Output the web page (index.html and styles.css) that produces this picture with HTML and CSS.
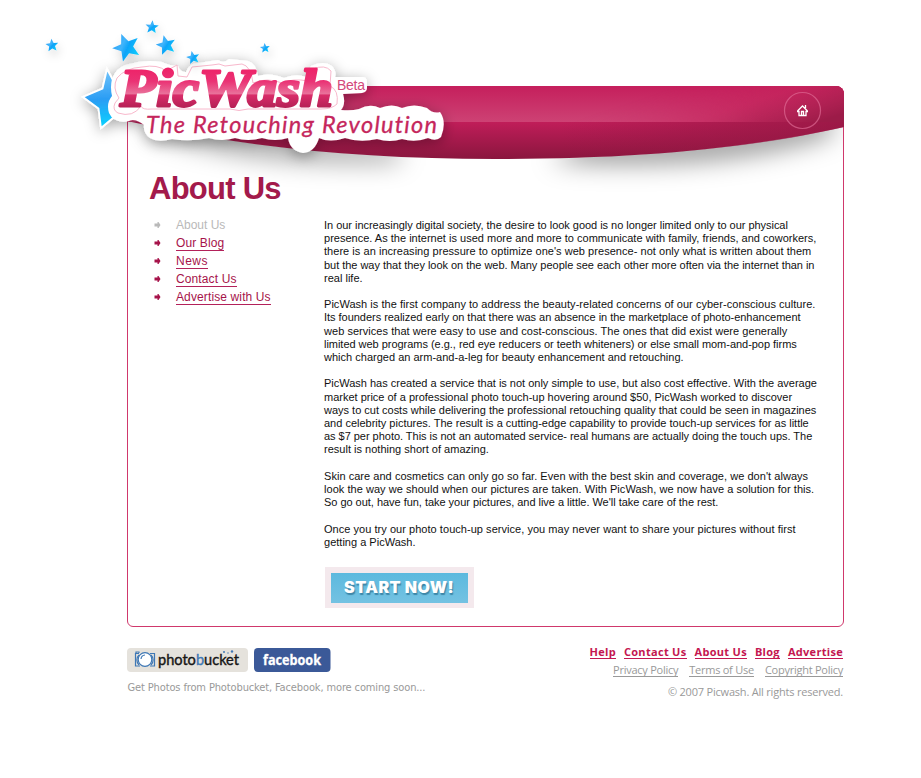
FILE: index.html
```html
<!DOCTYPE html>
<html lang="en">
<head>
<meta charset="utf-8">
<title>PicWash - About Us</title>
<link rel="stylesheet" href="styles.css">
</head>
<body>
<div class="page">
  <div class="panel">
    <h1>About Us</h1>
    <div class="columns">
      <ul class="menu">
        <li class="current"><svg class="arrow" viewBox="0 0 6 6"><path d="M0 1.500h3V0h1l2 3-2 3H3V4.500H0z"/></svg><span>About Us</span></li>
        <li><svg class="arrow" viewBox="0 0 6 6"><path d="M0 1.500h3V0h1l2 3-2 3H3V4.500H0z"/></svg><a>Our Blog</a></li>
        <li><svg class="arrow" viewBox="0 0 6 6"><path d="M0 1.500h3V0h1l2 3-2 3H3V4.500H0z"/></svg><a class="wide">News</a></li>
        <li><svg class="arrow" viewBox="0 0 6 6"><path d="M0 1.500h3V0h1l2 3-2 3H3V4.500H0z"/></svg><a>Contact Us</a></li>
        <li><svg class="arrow" viewBox="0 0 6 6"><path d="M0 1.500h3V0h1l2 3-2 3H3V4.500H0z"/></svg><a>Advertise with Us</a></li>
      </ul>
      <div class="copy">
        <p><span class="tight">In our increasingly digital society, the desire to look good is no longer limited only to our physical</span><br>presence. As the internet is used more and more to communicate with family, friends, and coworkers,<br><span class="loose">there is an increasing pressure to optimize one's web presence- not only what is written about them</span><br><span class="tight">but the way that they look on the web. Many people see each other more often via the internet than in</span><br>real life.</p>
        <p><span class="loose">PicWash is the first company to address the beauty-related concerns of our cyber-conscious culture.</span><br><span class="tight">Its founders realized early on that there was an absence in the marketplace of photo-enhancement</span><br><span class="loose">web services that were easy to use and cost-conscious. The ones that did exist were generally</span><br><span class="tight">limited web programs (e.g., red eye reducers or teeth whiteners) or else small mom-and-pop firms</span><br>which charged an arm-and-a-leg for beauty enhancement and retouching.</p>
        <p><span class="even">PicWash has created a service that is not only simple to use, but also cost effective. With the average<br>market price of a professional photo touch-up hovering around $50, PicWash worked to discover<br>ways to cut costs while delivering the professional retouching quality that could be seen in magazines<br>and celebrity pictures. The result is a cutting-edge capability to provide touch-up services for as little</span><br><span class="tight">as $7 per photo. This is not an automated service- real humans are actually doing the touch ups. The</span><br>result is nothing short of amazing.</p>
        <p><span class="loose">Skin care and cosmetics can only go so far. Even with the best skin and coverage, we don't always</span><br><span class="loose">look the way we should when our pictures are taken. With PicWash, we now have a solution for this.</span><br><span class="tight">So go out, have fun, take your pictures, and live a little. We'll take care of the rest.</span></p>
        <p><span class="loose">Once you try our photo touch-up service, you may never want to share your pictures without first</span><br>getting a PicWash.</p>
        <a class="start"><svg width="137" height="30"><text x="13" y="20">START NOW!</text></svg></a>
      </div>
    </div>
  </div>

  <div class="footer">
    <div class="partners">
      <div class="badges">
        <svg width="121" height="24" viewBox="0 0 121 24">
          <rect width="121" height="24" rx="4" fill="#e5e2dc"/>
          <g fill="none" stroke="#3f78b5" stroke-width="1.200">
            <path d="M12 5.500H8.500v12.500H13M9 5V4h3v1M23 5.500h4.500v12.500H23"/>
            <path d="M12 7a7 7 0 0 0 0 10M24 7a7 7 0 0 1 0 10"/>
            <circle cx="18" cy="11.500" r="6.800" fill="#fff"/>
            <path d="M14 11a4.500 4.500 0 0 1 4-4"/>
          </g>
          <text x="31" y="17" font-family="Lato, sans-serif" font-size="15" fill="#161616" stroke="#161616" stroke-width=".4" textLength="81" lengthAdjust="spacingAndGlyphs">photo<tspan fill="#3f78b5" stroke="#3f78b5">b</tspan>ucket</text>
          <g fill="#3f78b5"><circle cx="97" cy="4" r="1"/><circle cx="101" cy="5" r=".7"/><circle cx="105" cy="3.500" r="1.200"/></g>
        </svg>
        <svg width="77" height="24" viewBox="0 0 77 24">
          <rect width="76.500" height="24" rx="4" fill="#3b5998"/>
          <text x="9" y="17" font-family="Open Sans, sans-serif" font-size="14.500" font-weight="700" fill="#fff" stroke="#fff" stroke-width=".3" textLength="58" lengthAdjust="spacingAndGlyphs">facebook</text>
        </svg>
      </div>
      <div class="soon"><svg width="300" height="18"><text x="0.500" y="13" textLength="298">Get Photos from Photobucket, Facebook, more coming soon...</text></svg></div>
    </div>
    <div class="legal">
      <div class="links bold"><a>Help</a><a>Contact Us</a><a>About Us</a><a>Blog</a><a>Advertise</a></div>
      <div class="links"><a>Privacy Policy</a><a>Terms of Use</a><a>Copyright Policy</a></div>
      <div class="copyright">© 2007 Picwash. All rights reserved.</div>
    </div>
  </div>

  <svg class="masthead" width="921" height="210" viewBox="0 0 921 210">
    <defs>
      <linearGradient id="upper" x1="0" y1="0" x2="0" y2="1"><stop offset="0" stop-color="#c51f5c"/><stop offset="1" stop-color="#cd4274"/></linearGradient>
      <linearGradient id="lower" gradientUnits="userSpaceOnUse" x1="0" y1="122" x2="0" y2="159"><stop offset="0" stop-color="#c01d59"/><stop offset="1" stop-color="#8a163e"/></linearGradient>
      <linearGradient id="shine" gradientUnits="userSpaceOnUse" x1="690" y1="40" x2="740" y2="190"><stop offset=".25" stop-color="#c81f5c" stop-opacity="0"/><stop offset=".5" stop-color="#c4245c" stop-opacity=".7"/><stop offset=".75" stop-color="#9c1b48"/></linearGradient>
      <linearGradient id="fadeIn" x1="0" x2="1"><stop offset="0" stop-color="#000"/><stop offset=".7" stop-color="#fff"/></linearGradient>
      <mask id="rightSide"><rect x="560" y="86" width="284" height="36" fill="url(#fadeIn)"/></mask>
      <linearGradient id="rightDark" x1="0" x2="1"><stop offset="0" stop-color="#8e1740" stop-opacity="0"/><stop offset="1" stop-color="#8e1740" stop-opacity=".7"/></linearGradient>
      <linearGradient id="letters" gradientUnits="userSpaceOnUse" x1="0" y1="68" x2="0" y2="112"><stop offset="0" stop-color="#ee2268"/><stop offset=".3" stop-color="#ea3274"/><stop offset=".58" stop-color="#e9709a"/><stop offset=".62" stop-color="#d82c69"/><stop offset="1" stop-color="#a91d4e"/></linearGradient>
      <linearGradient id="blue" x1="0" y1="0" x2="1" y2="1"><stop offset="0" stop-color="#229af2"/><stop offset=".4" stop-color="#40b4fb"/><stop offset=".55" stop-color="#0fa4f8"/><stop offset="1" stop-color="#08dcff"/></linearGradient>
      <linearGradient id="bigBlue" gradientUnits="userSpaceOnUse" x1="104" y1="70" x2="108" y2="128"><stop offset="0" stop-color="#72c4fb"/><stop offset=".5" stop-color="#2a9df4"/><stop offset="1" stop-color="#08d4ff"/></linearGradient>
      <filter id="blur" x="-30%" y="-80%" width="160%" height="260%"><feGaussianBlur stdDeviation="13"/></filter>
      <filter id="soft" x="-20%" y="-50%" width="140%" height="200%"><feDropShadow dx="0" dy="3" stdDeviation="7" flood-color="#000" flood-opacity=".35"/></filter>
      <filter id="faint" x="-100%" y="-100%" width="300%" height="300%"><feDropShadow dx="2" dy="5" stdDeviation="5" flood-color="#000" flood-opacity=".16"/></filter>
      <path id="star" d="M0-10 2.800-3.300 9.800-3 4.500 1.500 6.200 8.600 0 4.900-6.200 8.600-4.500 1.500-9.800-3-2.800-3.300z"/>
      <clipPath id="under"><path d="M128 121C240 147 370 159 495 159S740 150 843 127V210H128z"/></clipPath>
    </defs>
    <g clip-path="url(#under)"><g filter="url(#blur)" fill="#000">
      <path opacity=".43" d="M590 138Q710 142 832 112V134Q720 172 550 160z"/>
      <path opacity=".42" d="M150 118Q260 140 400 148V160Q260 166 155 132z"/>
    </g></g>
    <path fill="url(#lower)" d="M127 121V86H836a8 8 0 0 1 8 8V127C740 150 630 159 495 159S240 147 127 121z"/>
    <path fill="url(#rightDark)" d="M560 122H844V127C770 144 690 154 560 158z"/>
    <path fill="url(#upper)" d="M127 86H836a8 8 0 0 1 8 8V122H127z"/>
    <path fill="url(#shine)" mask="url(#rightSide)" d="M560 86H836a8 8 0 0 1 8 8V122H560z"/>
    <circle cx="802.500" cy="110.500" r="18" fill="none" stroke="#e26f98" stroke-opacity=".65" stroke-width="1.200"/>
    <path fill="none" stroke="#fff" stroke-width="1.300" d="M797 111.500H799V115.500H806V111.500H808M797.500 111L802.500 106 807.500 111M805.500 108V105M801.500 115V111.500H803.500V115"/>

    <g filter="url(#soft)" fill="#fff">
      <path fill="url(#bigBlue)" stroke="#fff" stroke-width="1.800" d="M107 69 116 86 132 88V118L113 118 101 128 98.500 108.500 83 97 102.500 88.500z"/>
      <path d="M115 73Q120 66 129 64Q145 59 162 62Q170 66 178 66Q180 72 186 72Q189 63 198 63L218 60Q224 64 229 59L248 61Q256 63 258 76Q270 72 284 78Q296 73 306 77L311 66Q324 60 332 66Q337 72 335 77L362 77Q367 77 367 82V88Q367 92 362 93L343 94Q346 104 341 110Q352 111 359 109Q370 103 380 108Q392 103 402 108Q414 103 427 108Q433 114 440 112Q447 122 441 137Q436 142 428 138Q415 143 402 139Q390 143 377 139Q360 143 345 138Q330 143 319 138Q315 152 303 153Q290 151 288 138Q275 142 262 138Q248 142 235 138Q222 142 209 138Q190 142 172 139Q158 143 150 138Q143 133 144 125Q135 118 129 121Q114 124 109 113Q106 103 112 96Q109 82 115 73z"/>
    </g>
    <path fill="none" stroke="#f8b8cc" stroke-linejoin="round" d="M117 78Q125 68 142 67Q158 64 166 71L177 65 178 76 187 77 192 67 212 65 219 64 225 66 242 64Q251 66 253 83Q267 77 282 83Q293 78 308 81L313 69Q325 64 331 71L330 86Q339 90 337 104Q332 109 321 109L248 109Q239 112 230 109H152Q142 110 141 106Q133 118 118 113Q112 110 115 103L119 98Q112 88 117 78z"/>
    <g fill="url(#blue)" filter="url(#faint)">
      <use href="#star" transform="translate(52 45.300) rotate(-5) scale(.65)"/>
      <use href="#star" transform="translate(126.500 47) rotate(-22) scale(1.400)"/>
      <use href="#star" transform="translate(152 27) rotate(5) scale(.67)"/>
      <use href="#star" transform="translate(166 45) rotate(-14) scale(1)"/>
      <use href="#star" transform="translate(193 57.500) rotate(-12) scale(.67)"/>
      <use href="#star" transform="translate(265 48) rotate(-5) scale(.5)"/>
    </g>
    <text class="brand" x="120" y="106" fill="url(#letters)" stroke="url(#letters)" textLength="213" lengthAdjust="spacingAndGlyphs">PicWash</text>
    <text class="tagline" x="146" y="133" textLength="291">The Retouching Revolution</text>
    <text x="337" y="90" font-family="Liberation Sans, sans-serif" font-size="14" fill="#d3487a" textLength="28">Beta</text>
  </svg>
</div>
</body>
</html>
```
FILE: styles.css
```css
body { margin: 0; background: #fff; font-family: "Liberation Sans", Arial, sans-serif; }
.page { position: relative; width: 921px; height: 778px; overflow: hidden; padding-top: 86px; box-sizing: border-box; }
.panel { box-sizing: border-box; width: 717px; height: 541px; margin-left: 127px; border: 1px solid #d0386c; border-radius: 8px 8px 6px 6px; padding: 85px 0 0 21px; }
.masthead { position: absolute; left: 0; top: 0; pointer-events: none; }
.brand { font: italic 700 52px "Liberation Serif", serif; stroke-width: 2.8px; stroke-linejoin: round; }
.tagline { font: italic 23.5px Lato, sans-serif; font-variant-ligatures: none; fill: #c5265c; stroke: #c5265c; stroke-width: .3px; }
h1 { position: relative; z-index: 1; margin: 0; font-size: 31px; line-height: 34px; letter-spacing: -.75px; color: #a31a4b; }
.columns { display: flex; padding-top: 10px; }
.menu { list-style: none; margin: 0; padding: 0; width: 175px; font-size: 12px; color: #a6134a; }
.menu li { display: flex; align-items: center; height: 18px; }
.menu .current { color: #b9b9b9; }
.arrow { width: 7px; height: 6px; margin: 0 15px 0 5px; fill: currentColor; }
.menu a { margin-top: 1px; padding-top: 1px; border-bottom: 1px solid #b3215a; line-height: 13px; white-space: nowrap; letter-spacing: .12px; }
.menu .wide { letter-spacing: .5px; }
.copy { padding-top: 3px; font-size: 11px; line-height: 13.200px; color: #111; white-space: nowrap; letter-spacing: .01px; }
.copy p { margin: 0 0 13.200px; }
.tight { letter-spacing: -.03px; }
.loose { letter-spacing: .04px; }
.even { letter-spacing: -.005px; }
.start { display: flex; width: 137px; height: 30px; margin: 18px 0 0 1px; border: 6px solid #f4e9ed; border-bottom-width: 5px; background: linear-gradient(#5cb9de, #74c2e2); }
.start text { font: 900 16px Inter, "Liberation Sans", sans-serif; fill: #fff; text-shadow: 1px 2px 1px #3d87a8; letter-spacing: .5px; }
.footer { display: flex; justify-content: space-between; width: 716px; margin: 21px 0 0 127px; }
.badges { display: flex; gap: 6px; height: 24px; }
.soon { padding-top: 6px; }
.soon text { font: 11px "DejaVu Sans Condensed", "DejaVu Sans", sans-serif; fill: #999; }
.legal { display: flex; flex-direction: column; align-items: flex-end; font-family: "Open Sans", "Noto Sans", sans-serif; font-size: 11px; color: #999; margin-top: -2px; letter-spacing: -.25px; }
.links { display: flex; gap: 11px; line-height: 12px; height: 18px; align-items: flex-start; }
.links a { border-bottom: 1px solid #999; white-space: nowrap; }
.bold { gap: 8px; font-weight: 700; color: #c41650; letter-spacing: .3px; }
.bold a { border-color: #c41650; }
.copyright { line-height: 16px; margin-top: 2px; letter-spacing: -.2px; }
```
